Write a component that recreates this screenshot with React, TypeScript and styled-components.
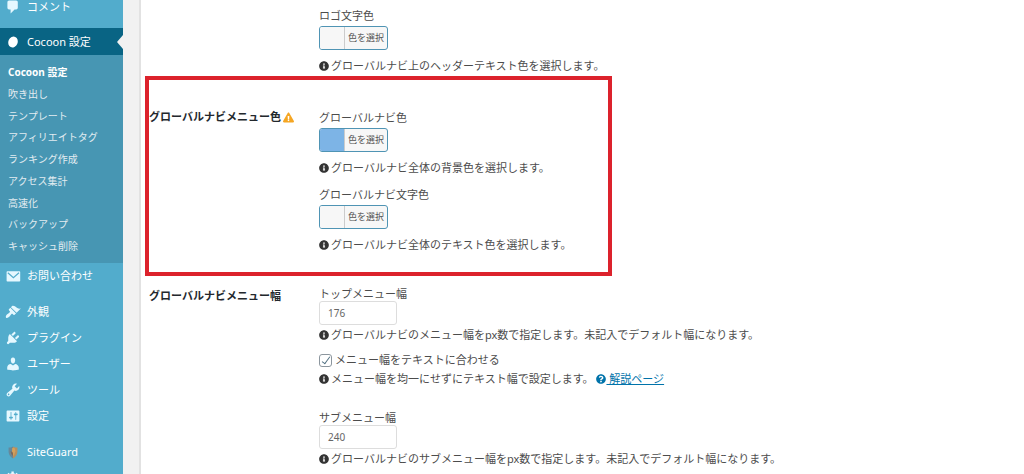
import React, { useState } from 'react';
import type { ReactNode } from 'react';
import styled, { createGlobalStyle, css } from 'styled-components';
import { FaInfoCircle, FaQuestionCircle, FaExclamationTriangle } from 'react-icons/fa';

const GlobalStyle = createGlobalStyle`
  *, *::before, *::after { box-sizing: border-box; }
  body {
    margin: 0;
    background: #f1f1f1;
    color: #4c4c4c;
    font-family: "Noto Sans", "Noto Sans CJK JP", sans-serif;
    font-size: 11px;
    line-height: 20px;
  }
`;

const Shell = styled.div`
  display: flex;
  height: 100vh;
  overflow: hidden;
`;

/* ---------- admin menu ---------- */

const Sidebar = styled.nav`
  flex: 0 0 123px;
  background: #52accc;
  overflow: hidden;
`;

const MenuList = styled.ul`
  list-style: none;
  margin: -6px 0 0;
  padding: 0;
`;

const MenuItem = styled.li<{ $space?: number }>`
  margin-top: ${(p) => p.$space ?? 0}px;
`;

const MenuLink = styled.a<{ $current?: boolean }>`
  position: relative;
  display: flex;
  align-items: center;
  gap: 6px;
  height: 26px;
  padding-left: 5px;
  color: #fff;
  text-decoration: none;

  ${(p) =>
    p.$current &&
    css`
      height: 27px;
      background: #096484;

      &::after {
        content: '';
        position: absolute;
        right: 0;
        top: 7px;
        border: 7px solid transparent;
        border-right: 6px solid #f1f1f1;
        border-left: 0;
      }
    `}
`;

const MenuIcon = styled.svg`
  flex: none;
  width: 16px;
  height: 16px;
  fill: #e5f8ff;
`;

const SubMenu = styled.ul`
  display: grid;
  align-content: space-between;
  min-height: 208px;
  list-style: none;
  margin: 0;
  padding: 7px 8px;
  background: #4796b3;
`;

const SubLink = styled.a<{ $current?: boolean }>`
  display: block;
  color: ${(p) => (p.$current ? '#fff' : '#e2ecf1')};
  font-size: 10px;
  font-weight: ${(p) => (p.$current ? 700 : 400)};
  text-decoration: none;
`;

/* ---------- settings form ---------- */

const Main = styled.main`
  position: relative;
  flex: 1;
  min-width: 0;
  padding-left: 16px;
`;

const Panel = styled.form`
  display: flex;
  flex-direction: column;
  gap: 31px;
  min-height: 100%;
  padding: 5px 8px;
  border-left: 2px solid #e2e2e2;
  background: #fff;
`;

const Row = styled.section`
  display: grid;
  grid-template-columns: 170px 1fr;
`;

const RowTitle = styled.h2`
  display: flex;
  align-items: center;
  gap: 2px;
  height: 20px;
  margin: 0;
  color: #23282d;
  font-size: 11px;
  font-weight: 700;

  svg { color: #f5a623; }
`;

const Fields = styled.div<{ $gap: number }>`
  display: grid;
  justify-items: start;
  gap: ${(p) => p.$gap}px;
`;

const Field = styled.div`
  display: grid;
  justify-items: start;
`;

const ColorLabel = styled.label`
  line-height: 21px;
`;

const TextLabel = styled.label`
  line-height: 15px;
`;

const ColorButton = styled.button`
  display: flex;
  height: 24px;
  margin: 0 0 6px;
  padding: 0;
  overflow: hidden;
  border: 1px solid #4f94b4;
  border-radius: 3px;
  background: #f7f7f7;
  color: #555;
  font: inherit;
  font-size: 9px;
  line-height: 22px;
`;

const Swatch = styled.span<{ $color: string }>`
  width: 24px;
  height: 22px;
  background: ${(p) => p.$color};
`;

const ColorCaption = styled.span`
  padding: 0 3px;
  border-left: 1px solid #ccc;
`;

const NumberBox = styled.input`
  width: 78px;
  height: 24px;
  padding: 0 8px;
  border: 1px solid #ddd;
  border-radius: 3px;
  background: #fff;
  color: #666;
  font: inherit;
  font-size: 10px;
`;

const CheckLabel = styled.label`
  display: flex;
  align-items: center;
  gap: 3px;
  height: 18px;
  margin-top: 6px;
`;

const CheckBox = styled.input`
  appearance: none;
  width: 13px;
  height: 13px;
  margin: 0;
  border: 1px solid #8c969e;
  border-radius: 3px;
  background: #fff;

  &:checked::before {
    content: '';
    display: block;
    width: 4px;
    height: 9px;
    margin: 0 0 0 4px;
    border: solid #4f6f80;
    border-width: 0 1px 1px 0;
    transform: rotate(36deg);
  }
`;

const HintText = styled.p`
  display: flex;
  align-items: center;
  gap: 2px;
  margin: 0;
  white-space: nowrap;

  > svg { color: #333; }
`;

const HelpLink = styled.a`
  color: #0073aa;

  svg { vertical-align: -1px; }
`;

const Highlight = styled.div`
  position: absolute;
  top: 76px;
  left: 22px;
  width: 467px;
  height: 200px;
  border: 4px solid #dc222c;
  pointer-events: none;
`;

/* ---------- icons ---------- */

const icons: Record<string, ReactNode> = {
  comments: (
    <path d="M5 2h9q.82 0 1.41.59T16 4v7q0 .82-.59 1.41T14 13h-2l-5 5v-5H5q-.82 0-1.41-.59T3 11V4q0-.82.59-1.41T5 2z" />
  ),
  cocoon: <ellipse cx="10" cy="10" rx="5.8" ry="7" fill="#fff" transform="rotate(24 10 10)" />,
  mail: (
    <>
      <rect x="2" y="4" width="17" height="13" rx="1" />
      <path d="M3.500 6L10.500 12L17.500 6" fill="none" stroke="#52accc" strokeWidth="1.500" />
    </>
  ),
  appearance: (
    <path d="M14.48 11.06L7.41 3.99l1.5-1.5c.5-.56 2.3-.47 3.51.32 1.21.8 1.43 1.28 2.91 2.1 1.18.64 2.45 1.26 4.45.85zm-.71.71L6.7 4.7 4.93 6.47c-.39.39-.39 1.02 0 1.41l1.06 1.06c.39.39.39 1.03 0 1.42-.6.6-1.43 1.11-2.21 1.69-.35.26-.7.53-1.01.84C1.43 14.23.4 16.08 1.4 17.07c.99 1 2.84-.03 4.18-1.36.31-.31.58-.66.85-1.02.57-.78 1.08-1.61 1.69-2.21.39-.39 1.02-.39 1.41 0l1.06 1.06c.39.39 1.02.39 1.41 0z" />
  ),
  plugins: (
    <path d="M13.11 4.36L9.87 7.6 8 5.73l3.24-3.24c.35-.34 1.05-.2 1.56.32.52.51.66 1.21.31 1.55zm-8 1.77l.91-1.12 9.01 9.01-1.19.84c-.71.71-2.63 1.16-3.82 1.16H6.14L4.9 17.26c-.59.59-1.54.59-2.12 0-.59-.58-.59-1.53 0-2.12l1.24-1.24v-3.88c0-1.13.4-3.19 1.09-3.89zm7.26 3.97l3.24-3.24c.34-.35 1.04-.21 1.55.31.52.51.66 1.21.31 1.55l-3.24 3.25z" />
  ),
  users: (
    <path d="M10 9.25c-2.27 0-2.73-3.44-2.73-3.44C7 4.02 7.82 2 9.97 2c2.16 0 2.98 2.02 2.71 3.81 0 0-.41 3.44-2.68 3.44zm0 2.57L12.72 10c2.39 0 4.52 2.33 4.52 4.53v2.49s-3.65 1.13-7.24 1.13c-3.65 0-7.24-1.13-7.24-1.13v-2.49c0-2.25 1.94-4.48 4.47-4.48z" />
  ),
  tools: (
    <path d="M16.68 9.77c-1.34 1.34-3.3 1.67-4.95.99l-5.41 6.52c-.99.99-2.59.99-3.58 0s-.99-2.59 0-3.57l6.52-5.42c-.68-1.65-.35-3.61.99-4.95 1.28-1.28 3.12-1.62 4.72-1.06l-2.89 2.89 2.82 2.82 2.86-2.87c.53 1.58.18 3.39-1.08 4.65zM3.81 16.21c.4.39 1.04.39 1.43 0 .4-.4.4-1.04 0-1.43-.39-.4-1.03-.4-1.43 0-.39.39-.39 1.03 0 1.43z" />
  ),
  settings: (
    <path d="M18 16V4c0-.55-.45-1-1-1H3c-.55 0-1 .45-1 1v12c0 .55.45 1 1 1h14c.55 0 1-.45 1-1zM8 11h1c.55 0 1 .45 1 1s-.45 1-1 1H8v1.5c0 .28-.22.5-.5.5s-.5-.22-.5-.5V13H6c-.55 0-1-.45-1-1s.45-1 1-1h1V5.5c0-.28.22-.5.5-.5s.5.22.5.5V11zm5-2h-1c-.55 0-1-.45-1-1s.45-1 1-1h1V5.5c0-.28.22-.5.5-.5s.5.22.5.5V7h1c.55 0 1 .45 1 1s-.45 1-1 1h-1v5.5c0 .28-.22.5-.5.5s-.5-.22-.5-.5V9z" />
  ),
  siteguard: (
    <>
      <path d="M10 3Q7.500 4.500 4.500 4.500V10Q5 15.500 10 18z" fill="#66889a" />
      <path d="M10 3Q12.500 4.500 15.500 4.500V10Q15 15.500 10 18z" fill="#b98f5e" />
      <path d="M9 5Q13 4 13 9L11 15Q8 12 9 5z" fill="#d3a05c" />
      <path d="M7 9Q9 9 10 11L10 15Q7 13 7 9z" fill="#7d6a5c" />
    </>
  ),
  generic: (
    <path d="M18 12h-2.180c-.17.7-.44 1.350-.81 1.930l1.540 1.540-2.100 2.100-1.540-1.540c-.58.36-1.230.63-1.910.79V19H8v-2.180c-.68-.16-1.330-.43-1.910-.79l-1.540 1.540-2.120-2.120 1.540-1.540c-.36-.58-.63-1.230-.79-1.910H1V9.030h2.170c.16-.7.44-1.350.8-1.940L2.430 5.550l2.100-2.100 1.540 1.540c.58-.37 1.240-.64 1.930-.81V2h3v2.180c.68.16 1.330.43 1.910.79l1.540-1.540 2.120 2.120-1.540 1.540c.36.59.64 1.240.8 1.940H18V12zm-8.500 1.500c1.660 0 3-1.340 3-3s-1.340-3-3-3-3 1.340-3 3 1.340 3 3 3z" />
  ),
};

interface MenuEntry {
  icon: string;
  label: string;
  space?: number;
  children?: string[];
}

const menu: MenuEntry[] = [
  { icon: 'comments', label: 'コメント' },
  {
    icon: 'cocoon',
    label: 'Cocoon 設定',
    space: 8,
    children: [
      'Cocoon 設定',
      '吹き出し',
      'テンプレート',
      'アフィリエイトタグ',
      'ランキング作成',
      'アクセス集計',
      '高速化',
      'バックアップ',
      'キャッシュ削除',
    ],
  },
  { icon: 'mail', label: 'お問い合わせ' },
  { icon: 'appearance', label: '外観', space: 10 },
  { icon: 'plugins', label: 'プラグイン' },
  { icon: 'users', label: 'ユーザー' },
  { icon: 'tools', label: 'ツール' },
  { icon: 'settings', label: '設定' },
  { icon: 'siteguard', label: 'SiteGuard', space: 10 },
  { icon: 'generic', label: '' },
];

const Hint = ({ children }: { children: ReactNode }) => (
  <HintText>
    <FaInfoCircle size={10} />
    <span>{children}</span>
  </HintText>
);

const ColorField = ({ id, label, color, hint }: { id: string; label: string; color: string; hint: string }) => (
  <Field>
    <ColorLabel htmlFor={id}>{label}</ColorLabel>
    <ColorButton id={id} type="button">
      <Swatch $color={color} />
      <ColorCaption>色を選択</ColorCaption>
    </ColorButton>
    <Hint>{hint}</Hint>
  </Field>
);

const WidthField = ({ id, label, value, hint }: { id: string; label: string; value: string; hint: string }) => (
  <Field>
    <TextLabel htmlFor={id}>{label}</TextLabel>
    <NumberBox id={id} type="text" inputMode="numeric" defaultValue={value} />
    <Hint>{hint}</Hint>
  </Field>
);

export default function App() {
  const [fitText, setFitText] = useState(true);

  return (
    <>
      <GlobalStyle />
      <Shell>
        <Sidebar>
          <MenuList>
            {menu.map((entry) => (
              <MenuItem key={entry.icon} $space={entry.space}>
                <MenuLink href="#" $current={!!entry.children}>
                  <MenuIcon viewBox="0 0 20 20" aria-hidden="true">
                    {icons[entry.icon]}
                  </MenuIcon>
                  {entry.label}
                </MenuLink>
                {entry.children && (
                  <SubMenu>
                    {entry.children.map((child, i) => (
                      <li key={child}>
                        <SubLink href="#" $current={i === 0}>
                          {child}
                        </SubLink>
                      </li>
                    ))}
                  </SubMenu>
                )}
              </MenuItem>
            ))}
          </MenuList>
        </Sidebar>

        <Main>
          <Panel>
            <Row>
              <span />
              <ColorField
                id="logo-text"
                label="ロゴ文字色"
                color="#f7f7f7"
                hint="グローバルナビ上のヘッダーテキスト色を選択します。"
              />
            </Row>

            <Row>
              <RowTitle>
                グローバルナビメニュー色
                <FaExclamationTriangle size={11} />
              </RowTitle>
              <Fields $gap={6}>
                <ColorField
                  id="nav-bg"
                  label="グローバルナビ色"
                  color="#7db4e6"
                  hint="グローバルナビ全体の背景色を選択します。"
                />
                <ColorField
                  id="nav-text"
                  label="グローバルナビ文字色"
                  color="#f7f7f7"
                  hint="グローバルナビ全体のテキスト色を選択します。"
                />
              </Fields>
            </Row>

            <Row>
              <RowTitle>グローバルナビメニュー幅</RowTitle>
              <Fields $gap={21}>
                <div>
                  <WidthField
                    id="top-width"
                    label="トップメニュー幅"
                    value="176"
                    hint="グローバルナビのメニュー幅をpx数で指定します。未記入でデフォルト幅になります。"
                  />
                  <CheckLabel>
                    <CheckBox type="checkbox" checked={fitText} onChange={(e) => setFitText(e.target.checked)} />
                    メニュー幅をテキストに合わせる
                  </CheckLabel>
                  <Hint>
                    メニュー幅を均一にせずにテキスト幅で設定します。{' '}
                    <HelpLink href="#">
                      <FaQuestionCircle size={10} /> 解説ページ
                    </HelpLink>
                  </Hint>
                </div>
                <WidthField
                  id="sub-width"
                  label="サブメニュー幅"
                  value="240"
                  hint="グローバルナビのサブメニュー幅をpx数で指定します。未記入でデフォルト幅になります。"
                />
              </Fields>
            </Row>
          </Panel>
          <Highlight />
        </Main>
      </Shell>
    </>
  );
}
